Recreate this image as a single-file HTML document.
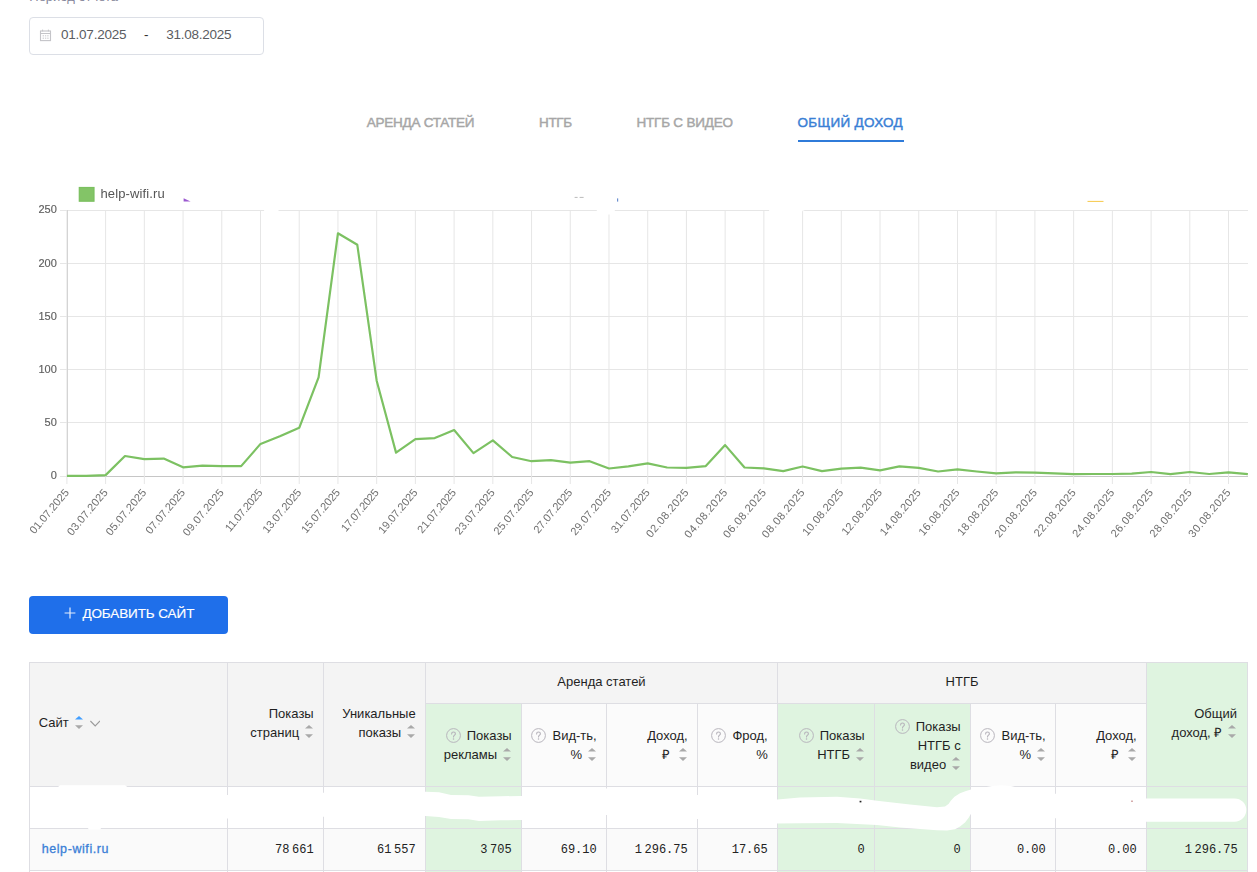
<!DOCTYPE html>
<html lang="ru"><head><meta charset="utf-8"><title>Статистика</title>
<style>
*{box-sizing:border-box;margin:0;padding:0}
html,body{width:1257px;height:872px;overflow:hidden;background:#fff}
body{font-family:"Liberation Sans",sans-serif;position:relative;color:#222}
.abs{position:absolute;white-space:nowrap}
.period{left:29.3px;top:-9.8px;font-size:13px;line-height:14px;color:#85859a}
.dbox{left:29px;top:17px;width:235px;height:38px;border:1px solid #dcdfe6;border-radius:4px;background:#fff}
.dtxt{font-size:13.5px;line-height:16px;color:#5a5c61;top:27.3px;letter-spacing:-0.25px}
.tab{font-size:13.5px;line-height:16px;color:#a6a6a6;top:114.5px;-webkit-text-stroke:0.45px currentColor}
.tab.act{color:#3a7fd5}
.tabline{left:798px;top:140px;width:106px;height:2px;background:#2f7bd9}
svg text{font-family:"Liberation Sans",sans-serif}
.yl{font-size:11px;fill:#5e5e5e;stroke:#5e5e5e;stroke-width:0.15px}
.xl{font-size:11px;fill:#707070}
.lg{font-size:13px;fill:#555;letter-spacing:0.13px}

.btn{left:29px;top:596px;width:199px;height:38px;border-radius:4px;background:#1f6fea}
.btxt{left:82.4px;top:605.3px;font-size:13.5px;line-height:17px;color:#fff;letter-spacing:-0.1px;-webkit-text-stroke:0.15px #fff}
.tb{left:29px;top:662px;width:1219px;height:210px;background:#dedee3}
.c{position:absolute;display:flex;align-items:center;justify-content:flex-end;text-align:right;
   padding:0 9.3px 0 4px;font-size:13px;line-height:19px;color:#1f1f1f;white-space:nowrap}
.c.l{justify-content:flex-start;text-align:left;padding-left:8.7px}
.c.m{justify-content:center;text-align:center;padding:0 0 4px 0}
.c.h{padding-bottom:4px}
.c.t{padding-right:10.1px}
.d{font-family:"Liberation Mono",monospace;font-size:12px;color:#222;letter-spacing:0}
.ts{display:inline-block;width:2.6px}
.q{display:inline-block;width:15px;height:15px;vertical-align:-3px;margin-right:6.1px}
.s{display:inline-block;width:8px;height:13px;vertical-align:-1.5px;margin-left:5.9px;margin-right:0.7px}
.lnk{color:#3b80d7;-webkit-text-stroke:0.3px #3b80d7;font-size:12.5px;letter-spacing:0.58px;position:relative;top:-0.3px;left:3.0px}
</style></head><body>
<div class="abs period">Период отчета</div>
<div class="abs dbox"></div>
<svg class="abs" style="left:39px;top:29px" width="13" height="13" viewBox="0 0 13 13"><rect x="1.5" y="2" width="10" height="9.6" fill="none" stroke="#c4c4c8" stroke-width="1.1"/><line x1="1.5" x2="11.5" y1="4.5" y2="4.5" stroke="#c4c4c8" stroke-width="1"/><line x1="3.6" x2="3.6" y1="0.6" y2="2.4" stroke="#c4c4c8" stroke-width="1"/><line x1="9.4" x2="9.4" y1="0.6" y2="2.4" stroke="#c4c4c8" stroke-width="1"/><g fill="#d0d0d4"><rect x="3.6" y="6.2" width="1.4" height="1.2"/><rect x="5.9" y="6.2" width="1.4" height="1.2"/><rect x="8.2" y="6.2" width="1.4" height="1.2"/><rect x="3.6" y="8.6" width="1.4" height="1.2"/><rect x="5.9" y="8.6" width="1.4" height="1.2"/><rect x="8.2" y="8.6" width="1.4" height="1.2"/></g></svg>
<div class="abs dtxt" style="left:61.1px">01.07.2025</div>
<div class="abs dtxt" style="left:144px;color:#303133">-</div>
<div class="abs dtxt" style="left:166.3px">31.08.2025</div>
<div class="abs tab" id="t1" style="left:366.8px;letter-spacing:-0.25px">АРЕНДА СТАТЕЙ</div>
<div class="abs tab" id="t2" style="left:539px;letter-spacing:-0.37px">НТГБ</div>
<div class="abs tab" id="t3" style="left:636.5px;letter-spacing:-0.21px">НТГБ С ВИДЕО</div>
<div class="abs tab act" id="t4" style="left:797.5px;letter-spacing:0.31px">ОБЩИЙ ДОХОД</div>
<div class="abs tabline"></div>
<svg class="chart" width="1257" height="400" viewBox="0 180 1257 400" style="position:absolute;left:0;top:180px;will-change:transform">
<line x1="60" x2="1248" y1="210.5" y2="210.5" stroke="#e6e6e6" stroke-width="1"/>
<text x="56.8" y="213.14" text-anchor="end" class="yl">250</text>
<line x1="60" x2="1248" y1="263.5" y2="263.5" stroke="#e6e6e6" stroke-width="1"/>
<text x="56.8" y="267.14" text-anchor="end" class="yl">200</text>
<line x1="60" x2="1248" y1="316.5" y2="316.5" stroke="#e6e6e6" stroke-width="1"/>
<text x="56.8" y="320.04" text-anchor="end" class="yl">150</text>
<line x1="60" x2="1248" y1="369.5" y2="369.5" stroke="#e6e6e6" stroke-width="1"/>
<text x="56.8" y="373.14" text-anchor="end" class="yl">100</text>
<line x1="60" x2="1248" y1="422.5" y2="422.5" stroke="#e6e6e6" stroke-width="1"/>
<text x="56.8" y="426.14" text-anchor="end" class="yl">50</text>
<line x1="60" x2="1248" y1="476.5" y2="476.5" stroke="#e6e6e6" stroke-width="1"/>
<line x1="67" x2="1248" y1="476.5" y2="476.5" stroke="#c6c6c6" stroke-width="1"/>
<text x="56.8" y="478.94" text-anchor="end" class="yl">0</text>
<line x1="66.9" x2="66.9" y1="210" y2="484" stroke="#e6e6e6" stroke-width="1"/>
<line x1="67.5" x2="67.5" y1="210" y2="477" stroke="#d4d4d4" stroke-width="1"/>
<text class="xl" text-anchor="end" textLength="54.6" lengthAdjust="spacing" transform="translate(69.60,492.8) rotate(-50)">01.07.2025</text>
<line x1="105.62" x2="105.62" y1="210" y2="484" stroke="#e6e6e6" stroke-width="1"/>
<text class="xl" text-anchor="end" textLength="56.6" lengthAdjust="spacing" transform="translate(108.32,492.8) rotate(-50)">03.07.2025</text>
<line x1="144.34" x2="144.34" y1="210" y2="484" stroke="#e6e6e6" stroke-width="1"/>
<text class="xl" text-anchor="end" textLength="56.6" lengthAdjust="spacing" transform="translate(147.04,492.8) rotate(-50)">05.07.2025</text>
<line x1="183.06" x2="183.06" y1="210" y2="484" stroke="#e6e6e6" stroke-width="1"/>
<text class="xl" text-anchor="end" textLength="54.7" lengthAdjust="spacing" transform="translate(185.76,492.8) rotate(-50)">07.07.2025</text>
<line x1="221.78" x2="221.78" y1="210" y2="484" stroke="#e6e6e6" stroke-width="1"/>
<text class="xl" text-anchor="end" textLength="57.3" lengthAdjust="spacing" transform="translate(224.48,492.8) rotate(-50)">09.07.2025</text>
<line x1="260.5" x2="260.5" y1="210" y2="484" stroke="#e6e6e6" stroke-width="1"/>
<text class="xl" text-anchor="end" textLength="51.7" lengthAdjust="spacing" transform="translate(263.20,492.8) rotate(-50)">11.07.2025</text>
<line x1="299.22" x2="299.22" y1="210" y2="484" stroke="#e6e6e6" stroke-width="1"/>
<text class="xl" text-anchor="end" textLength="53.7" lengthAdjust="spacing" transform="translate(301.92,492.8) rotate(-50)">13.07.2025</text>
<line x1="337.94" x2="337.94" y1="210" y2="484" stroke="#e6e6e6" stroke-width="1"/>
<text class="xl" text-anchor="end" textLength="53.7" lengthAdjust="spacing" transform="translate(340.64,492.8) rotate(-50)">15.07.2025</text>
<line x1="376.67" x2="376.67" y1="210" y2="484" stroke="#e6e6e6" stroke-width="1"/>
<text class="xl" text-anchor="end" textLength="51.8" lengthAdjust="spacing" transform="translate(379.37,492.8) rotate(-50)">17.07.2025</text>
<line x1="415.39" x2="415.39" y1="210" y2="484" stroke="#e6e6e6" stroke-width="1"/>
<text class="xl" text-anchor="end" textLength="54.4" lengthAdjust="spacing" transform="translate(418.09,492.8) rotate(-50)">19.07.2025</text>
<line x1="454.11" x2="454.11" y1="210" y2="484" stroke="#e6e6e6" stroke-width="1"/>
<text class="xl" text-anchor="end" textLength="53.7" lengthAdjust="spacing" transform="translate(456.81,492.8) rotate(-50)">21.07.2025</text>
<line x1="492.83" x2="492.83" y1="210" y2="484" stroke="#e6e6e6" stroke-width="1"/>
<text class="xl" text-anchor="end" textLength="55.7" lengthAdjust="spacing" transform="translate(495.53,492.8) rotate(-50)">23.07.2025</text>
<line x1="531.55" x2="531.55" y1="210" y2="484" stroke="#e6e6e6" stroke-width="1"/>
<text class="xl" text-anchor="end" textLength="55.7" lengthAdjust="spacing" transform="translate(534.25,492.8) rotate(-50)">25.07.2025</text>
<line x1="570.27" x2="570.27" y1="210" y2="484" stroke="#e6e6e6" stroke-width="1"/>
<text class="xl" text-anchor="end" textLength="53.8" lengthAdjust="spacing" transform="translate(572.97,492.8) rotate(-50)">27.07.2025</text>
<line x1="608.99" x2="608.99" y1="210" y2="484" stroke="#e6e6e6" stroke-width="1"/>
<text class="xl" text-anchor="end" textLength="56.4" lengthAdjust="spacing" transform="translate(611.69,492.8) rotate(-50)">29.07.2025</text>
<line x1="647.71" x2="647.71" y1="210" y2="484" stroke="#e6e6e6" stroke-width="1"/>
<text class="xl" text-anchor="end" textLength="53.7" lengthAdjust="spacing" transform="translate(650.41,492.8) rotate(-50)">31.07.2025</text>
<line x1="686.43" x2="686.43" y1="210" y2="484" stroke="#e6e6e6" stroke-width="1"/>
<text class="xl" text-anchor="end" textLength="59.2" lengthAdjust="spacing" transform="translate(689.13,492.8) rotate(-50)">02.08.2025</text>
<line x1="725.15" x2="725.15" y1="210" y2="484" stroke="#e6e6e6" stroke-width="1"/>
<text class="xl" text-anchor="end" textLength="59.9" lengthAdjust="spacing" transform="translate(727.85,492.8) rotate(-50)">04.08.2025</text>
<line x1="763.87" x2="763.87" y1="210" y2="484" stroke="#e6e6e6" stroke-width="1"/>
<text class="xl" text-anchor="end" textLength="59.9" lengthAdjust="spacing" transform="translate(766.57,492.8) rotate(-50)">06.08.2025</text>
<line x1="802.59" x2="802.59" y1="210" y2="484" stroke="#e6e6e6" stroke-width="1"/>
<text class="xl" text-anchor="end" textLength="59.9" lengthAdjust="spacing" transform="translate(805.29,492.8) rotate(-50)">08.08.2025</text>
<line x1="841.31" x2="841.31" y1="210" y2="484" stroke="#e6e6e6" stroke-width="1"/>
<text class="xl" text-anchor="end" textLength="57.2" lengthAdjust="spacing" transform="translate(844.01,492.8) rotate(-50)">10.08.2025</text>
<line x1="880.03" x2="880.03" y1="210" y2="484" stroke="#e6e6e6" stroke-width="1"/>
<text class="xl" text-anchor="end" textLength="56.3" lengthAdjust="spacing" transform="translate(882.73,492.8) rotate(-50)">12.08.2025</text>
<line x1="918.75" x2="918.75" y1="210" y2="484" stroke="#e6e6e6" stroke-width="1"/>
<text class="xl" text-anchor="end" textLength="57.0" lengthAdjust="spacing" transform="translate(921.45,492.8) rotate(-50)">14.08.2025</text>
<line x1="957.48" x2="957.48" y1="210" y2="484" stroke="#e6e6e6" stroke-width="1"/>
<text class="xl" text-anchor="end" textLength="57.0" lengthAdjust="spacing" transform="translate(960.18,492.8) rotate(-50)">16.08.2025</text>
<line x1="996.2" x2="996.2" y1="210" y2="484" stroke="#e6e6e6" stroke-width="1"/>
<text class="xl" text-anchor="end" textLength="57.0" lengthAdjust="spacing" transform="translate(998.90,492.8) rotate(-50)">18.08.2025</text>
<line x1="1034.92" x2="1034.92" y1="210" y2="484" stroke="#e6e6e6" stroke-width="1"/>
<text class="xl" text-anchor="end" textLength="59.2" lengthAdjust="spacing" transform="translate(1037.62,492.8) rotate(-50)">20.08.2025</text>
<line x1="1073.64" x2="1073.64" y1="210" y2="484" stroke="#e6e6e6" stroke-width="1"/>
<text class="xl" text-anchor="end" textLength="58.3" lengthAdjust="spacing" transform="translate(1076.34,492.8) rotate(-50)">22.08.2025</text>
<line x1="1112.36" x2="1112.36" y1="210" y2="484" stroke="#e6e6e6" stroke-width="1"/>
<text class="xl" text-anchor="end" textLength="59.0" lengthAdjust="spacing" transform="translate(1115.06,492.8) rotate(-50)">24.08.2025</text>
<line x1="1151.08" x2="1151.08" y1="210" y2="484" stroke="#e6e6e6" stroke-width="1"/>
<text class="xl" text-anchor="end" textLength="59.0" lengthAdjust="spacing" transform="translate(1153.78,492.8) rotate(-50)">26.08.2025</text>
<line x1="1189.8" x2="1189.8" y1="210" y2="484" stroke="#e6e6e6" stroke-width="1"/>
<text class="xl" text-anchor="end" textLength="59.0" lengthAdjust="spacing" transform="translate(1192.50,492.8) rotate(-50)">28.08.2025</text>
<line x1="1228.52" x2="1228.52" y1="210" y2="484" stroke="#e6e6e6" stroke-width="1"/>
<text class="xl" text-anchor="end" textLength="59.2" lengthAdjust="spacing" transform="translate(1231.22,492.8) rotate(-50)">30.08.2025</text>
<clipPath id="ca"><rect x="66.4" y="205" width="1181.98" height="272"/></clipPath>
<polyline clip-path="url(#ca)" points="66.90,475.9 86.26,475.9 105.62,475.1 124.98,456.0 144.34,459.2 163.70,458.6 183.06,467.3 202.42,465.7 221.78,466.1 241.14,466.1 260.50,443.9 279.86,436.3 299.22,427.8 318.58,377.4 337.94,233.3 357.30,244.8 376.67,380.7 396.03,452.6 415.39,439.1 434.75,438.1 454.11,430.0 473.47,453.1 492.83,440.3 512.19,457.0 531.55,461.2 550.91,460.2 570.27,462.6 589.63,461.2 608.99,468.5 628.35,466.3 647.71,463.4 667.07,467.5 686.43,467.9 705.79,466.1 725.15,445.1 744.51,467.5 763.87,468.3 783.23,471.1 802.59,466.5 821.95,471.1 841.31,468.7 860.67,467.7 880.03,470.3 899.39,466.3 918.75,467.9 938.11,471.5 957.48,469.3 976.84,471.5 996.20,473.4 1015.56,472.3 1034.92,472.6 1054.28,473.4 1073.64,474.2 1093.00,474.0 1112.36,474.0 1131.72,473.7 1151.08,472.0 1170.44,474.2 1189.80,472.0 1209.16,474.0 1228.52,472.3 1247.88,474.2" fill="none" stroke="#7cc162" stroke-width="2.2" stroke-linejoin="round" stroke-linecap="butt"/>
<rect x="79.3" y="187.5" width="14.7" height="13.7" fill="#83c467" stroke="#7bc05f" stroke-width="1.2"/>
<text x="100.5" y="198.3" class="lg">help-wifi.ru</text>
<g fill="#fff"><rect x="264" y="209" width="14.5" height="3" rx="1.5"/><rect x="596.8" y="206" width="18" height="8.4" rx="2"/><rect x="768.9" y="207" width="33.8" height="5" rx="2"/><rect x="802" y="207" width="2.2" height="3.6"/></g>
<rect x="574.6" y="196.9" width="3" height="1" fill="#bbb"/><rect x="579.6" y="196.9" width="4" height="1" fill="#bbb"/>
<rect x="617" y="198.4" width="1.2" height="3.2" fill="#6b8fd0"/>
<path d="M183.6 198.2 L190.6 201.6 L183.6 201.6 Z" fill="#9b59d0"/>
<line x1="1087.5" x2="1103.5" y1="201.4" y2="201.4" stroke="#f7c948" stroke-width="1"/>
</svg>
<div class="abs btn"></div>
<svg class="abs" style="left:64px;top:607px" width="12" height="12" viewBox="0 0 12 12"><path d="M6 0.6 V11.4 M0.6 6 H11.4" stroke="#e4edfc" stroke-width="1.2" fill="none"/></svg>
<div class="abs btxt" id="btxt">ДОБАВИТЬ САЙТ</div>
<div class="abs tb">
<div class="c l h" style="left:1px;top:1px;width:197px;height:123px;background:#f4f4f4"><div>Сайт<svg class="s" viewBox="0 0 8 13"><path d="M0 3.6 L4 0 L8 3.6 Z" fill="#409eff"/><path d="M0 9.3 L4 12.9 L8 9.3 Z" fill="#a9a9a9"/></svg><svg style="display:inline-block;width:10.4px;height:7px;vertical-align:0px;margin-left:6.6px" viewBox="0 0 10.4 7"><path d="M0.4 1.0 L5.2 6.0 L10 1.0" fill="none" stroke="#9a9a9a" stroke-width="1.1"/></svg></div></div>
<div class="c h" style="left:199px;top:1px;width:95px;height:123px;background:#f4f4f4"><div>Показы<br>страниц<svg class="s" viewBox="0 0 8 13"><path d="M0 3.6 L4 0 L8 3.6 Z" fill="#a9a9a9"/><path d="M0 9.3 L4 12.9 L8 9.3 Z" fill="#a9a9a9"/></svg></div></div>
<div class="c h" style="left:295px;top:1px;width:101px;height:123px;background:#f4f4f4"><div>Уникальные<br>показы<svg class="s" viewBox="0 0 8 13"><path d="M0 3.6 L4 0 L8 3.6 Z" fill="#a9a9a9"/><path d="M0 9.3 L4 12.9 L8 9.3 Z" fill="#a9a9a9"/></svg></div></div>
<div class="c m" style="left:397px;top:1px;width:351px;height:40px;background:#f4f4f4"><div>Аренда статей</div></div>
<div class="c m" style="left:749px;top:1px;width:368px;height:40px;background:#f4f4f4"><div>НТГБ</div></div>
<div class="c h t" style="left:1118px;top:1px;width:100px;height:123px;background:#dff4e0"><div>Общий<br>доход, ₽<svg class="s" viewBox="0 0 8 13"><path d="M0 3.6 L4 0 L8 3.6 Z" fill="#a9a9a9"/><path d="M0 9.3 L4 12.9 L8 9.3 Z" fill="#a9a9a9"/></svg></div></div>
<div class="c " style="left:397px;top:42px;width:95px;height:82px;background:#dff4e0"><div><svg class="q" viewBox="0 0 15 15"><circle cx="7.5" cy="7.5" r="6.9" fill="none" stroke="#b8b5bd" stroke-width="1"/><path d="M5.6 5.9 C5.6 4.6 6.5 4 7.5 4 C8.6 4 9.4 4.7 9.4 5.7 C9.4 7.1 7.5 7.1 7.5 8.9" fill="none" stroke="#b5b2ba" stroke-width="1.1" stroke-linecap="round"/><circle cx="7.5" cy="10.9" r="0.75" fill="#b5b2ba"/></svg>Показы<br>рекламы<svg class="s" viewBox="0 0 8 13"><path d="M0 3.6 L4 0 L8 3.6 Z" fill="#a9a9a9"/><path d="M0 9.3 L4 12.9 L8 9.3 Z" fill="#a9a9a9"/></svg></div></div>
<div class="c " style="left:493px;top:42px;width:84px;height:82px;background:#fbfbfb"><div><svg class="q" viewBox="0 0 15 15"><circle cx="7.5" cy="7.5" r="6.9" fill="none" stroke="#b8b5bd" stroke-width="1"/><path d="M5.6 5.9 C5.6 4.6 6.5 4 7.5 4 C8.6 4 9.4 4.7 9.4 5.7 C9.4 7.1 7.5 7.1 7.5 8.9" fill="none" stroke="#b5b2ba" stroke-width="1.1" stroke-linecap="round"/><circle cx="7.5" cy="10.9" r="0.75" fill="#b5b2ba"/></svg>Вид-ть,<br>%<svg class="s" viewBox="0 0 8 13"><path d="M0 3.6 L4 0 L8 3.6 Z" fill="#a9a9a9"/><path d="M0 9.3 L4 12.9 L8 9.3 Z" fill="#a9a9a9"/></svg></div></div>
<div class="c " style="left:578px;top:42px;width:90px;height:82px;background:#fbfbfb"><div>Доход,<br><span style="margin-right:2.7px">₽</span><svg class="s" viewBox="0 0 8 13"><path d="M0 3.6 L4 0 L8 3.6 Z" fill="#a9a9a9"/><path d="M0 9.3 L4 12.9 L8 9.3 Z" fill="#a9a9a9"/></svg></div></div>
<div class="c " style="left:669px;top:42px;width:79px;height:82px;background:#fbfbfb"><div><svg class="q" viewBox="0 0 15 15"><circle cx="7.5" cy="7.5" r="6.9" fill="none" stroke="#b8b5bd" stroke-width="1"/><path d="M5.6 5.9 C5.6 4.6 6.5 4 7.5 4 C8.6 4 9.4 4.7 9.4 5.7 C9.4 7.1 7.5 7.1 7.5 8.9" fill="none" stroke="#b5b2ba" stroke-width="1.1" stroke-linecap="round"/><circle cx="7.5" cy="10.9" r="0.75" fill="#b5b2ba"/></svg>Фрод,<br>%</div></div>
<div class="c " style="left:749px;top:42px;width:96px;height:82px;background:#dff4e0"><div><svg class="q" viewBox="0 0 15 15"><circle cx="7.5" cy="7.5" r="6.9" fill="none" stroke="#b8b5bd" stroke-width="1"/><path d="M5.6 5.9 C5.6 4.6 6.5 4 7.5 4 C8.6 4 9.4 4.7 9.4 5.7 C9.4 7.1 7.5 7.1 7.5 8.9" fill="none" stroke="#b5b2ba" stroke-width="1.1" stroke-linecap="round"/><circle cx="7.5" cy="10.9" r="0.75" fill="#b5b2ba"/></svg>Показы<br>НТГБ<svg class="s" viewBox="0 0 8 13"><path d="M0 3.6 L4 0 L8 3.6 Z" fill="#a9a9a9"/><path d="M0 9.3 L4 12.9 L8 9.3 Z" fill="#a9a9a9"/></svg></div></div>
<div class="c " style="left:846px;top:42px;width:95px;height:82px;background:#dff4e0"><div><svg class="q" viewBox="0 0 15 15"><circle cx="7.5" cy="7.5" r="6.9" fill="none" stroke="#b8b5bd" stroke-width="1"/><path d="M5.6 5.9 C5.6 4.6 6.5 4 7.5 4 C8.6 4 9.4 4.7 9.4 5.7 C9.4 7.1 7.5 7.1 7.5 8.9" fill="none" stroke="#b5b2ba" stroke-width="1.1" stroke-linecap="round"/><circle cx="7.5" cy="10.9" r="0.75" fill="#b5b2ba"/></svg>Показы<br>НТГБ с<br>видео<svg class="s" viewBox="0 0 8 13"><path d="M0 3.6 L4 0 L8 3.6 Z" fill="#a9a9a9"/><path d="M0 9.3 L4 12.9 L8 9.3 Z" fill="#a9a9a9"/></svg></div></div>
<div class="c " style="left:942px;top:42px;width:84px;height:82px;background:#fbfbfb"><div><svg class="q" viewBox="0 0 15 15"><circle cx="7.5" cy="7.5" r="6.9" fill="none" stroke="#b8b5bd" stroke-width="1"/><path d="M5.6 5.9 C5.6 4.6 6.5 4 7.5 4 C8.6 4 9.4 4.7 9.4 5.7 C9.4 7.1 7.5 7.1 7.5 8.9" fill="none" stroke="#b5b2ba" stroke-width="1.1" stroke-linecap="round"/><circle cx="7.5" cy="10.9" r="0.75" fill="#b5b2ba"/></svg>Вид-ть,<br>%<svg class="s" viewBox="0 0 8 13"><path d="M0 3.6 L4 0 L8 3.6 Z" fill="#a9a9a9"/><path d="M0 9.3 L4 12.9 L8 9.3 Z" fill="#a9a9a9"/></svg></div></div>
<div class="c " style="left:1027px;top:42px;width:90px;height:82px;background:#fbfbfb"><div>Доход,<br><span style="margin-right:2.7px">₽</span><svg class="s" viewBox="0 0 8 13"><path d="M0 3.6 L4 0 L8 3.6 Z" fill="#a9a9a9"/><path d="M0 9.3 L4 12.9 L8 9.3 Z" fill="#a9a9a9"/></svg></div></div>
<div class="c " style="left:1px;top:125px;width:197px;height:41px;background:#fff"><div></div></div>
<div class="c " style="left:199px;top:125px;width:95px;height:41px;background:#fff"><div></div></div>
<div class="c " style="left:295px;top:125px;width:101px;height:41px;background:#fff"><div></div></div>
<div class="c " style="left:397px;top:125px;width:95px;height:41px;background:#dff4e0"><div></div></div>
<div class="c " style="left:493px;top:125px;width:84px;height:41px;background:#fff"><div></div></div>
<div class="c " style="left:578px;top:125px;width:90px;height:41px;background:#fff"><div></div></div>
<div class="c " style="left:669px;top:125px;width:79px;height:41px;background:#fff"><div></div></div>
<div class="c " style="left:749px;top:125px;width:96px;height:41px;background:#dff4e0"><div></div></div>
<div class="c " style="left:846px;top:125px;width:95px;height:41px;background:#dff4e0"><div></div></div>
<div class="c " style="left:942px;top:125px;width:84px;height:41px;background:#fff"><div></div></div>
<div class="c " style="left:1027px;top:125px;width:90px;height:41px;background:#fff"><div></div></div>
<div class="c " style="left:1118px;top:125px;width:100px;height:41px;background:#dff4e0"><div></div></div>
<div class="c l" style="left:1px;top:167px;width:197px;height:41px;background:#fafafa"><div><span class="lnk">help-wifi.ru</span></div></div>
<div class="c " style="left:199px;top:167px;width:95px;height:41px;background:#fafafa"><div><span class="d">78<span class="ts"></span>661</span></div></div>
<div class="c " style="left:295px;top:167px;width:101px;height:41px;background:#fafafa"><div><span class="d">61<span class="ts"></span>557</span></div></div>
<div class="c " style="left:397px;top:167px;width:95px;height:41px;background:#dff4e0"><div><span class="d">3<span class="ts"></span>705</span></div></div>
<div class="c " style="left:493px;top:167px;width:84px;height:41px;background:#fafafa"><div><span class="d">69.10</span></div></div>
<div class="c " style="left:578px;top:167px;width:90px;height:41px;background:#fafafa"><div><span class="d">1<span class="ts"></span>296.75</span></div></div>
<div class="c " style="left:669px;top:167px;width:79px;height:41px;background:#fafafa"><div><span class="d">17.65</span></div></div>
<div class="c " style="left:749px;top:167px;width:96px;height:41px;background:#dff4e0"><div><span class="d">0</span></div></div>
<div class="c " style="left:846px;top:167px;width:95px;height:41px;background:#dff4e0"><div><span class="d">0</span></div></div>
<div class="c " style="left:942px;top:167px;width:84px;height:41px;background:#fafafa"><div><span class="d">0.00</span></div></div>
<div class="c " style="left:1027px;top:167px;width:90px;height:41px;background:#fafafa"><div><span class="d">0.00</span></div></div>
<div class="c " style="left:1118px;top:167px;width:100px;height:41px;background:#dff4e0"><div><span class="d">1<span class="ts"></span>296.75</span></div></div>
<div class="c " style="left:1px;top:209px;width:197px;height:41px;background:#fff"><div></div></div>
<div class="c " style="left:199px;top:209px;width:95px;height:41px;background:#fff"><div></div></div>
<div class="c " style="left:295px;top:209px;width:101px;height:41px;background:#fff"><div></div></div>
<div class="c " style="left:397px;top:209px;width:95px;height:41px;background:#dff4e0"><div></div></div>
<div class="c " style="left:493px;top:209px;width:84px;height:41px;background:#fff"><div></div></div>
<div class="c " style="left:578px;top:209px;width:90px;height:41px;background:#fff"><div></div></div>
<div class="c " style="left:669px;top:209px;width:79px;height:41px;background:#fff"><div></div></div>
<div class="c " style="left:749px;top:209px;width:96px;height:41px;background:#dff4e0"><div></div></div>
<div class="c " style="left:846px;top:209px;width:95px;height:41px;background:#dff4e0"><div></div></div>
<div class="c " style="left:942px;top:209px;width:84px;height:41px;background:#fff"><div></div></div>
<div class="c " style="left:1027px;top:209px;width:90px;height:41px;background:#fff"><div></div></div>
<div class="c " style="left:1118px;top:209px;width:100px;height:41px;background:#dff4e0"><div></div></div>
</div>
<svg class="abs" style="left:0;top:770px" width="1257" height="70" viewBox="0 770 1257 70"><path d="M30 795 L56 795 L57.5 787.5 L60 785.3 L125 785.3 L128 787.5 L130 793 L227.5 795 L323.4 792.7 L425.5 791.8 L439 792.3 L451 795 L468.5 795.2 L479 796.8 L501 796.3 L521.4 795.9 L560 790 L606.4 788.4 L650 789 L697.3 795 L740 797.5 L777.5 799.4 L800 797.5 L837 796.7 L860 798.5 L877 800.7 L910 804.5 L937 807.2 L945 806.6 L948.5 804 L951 800.5 L954.5 796.8 L960 793.3 L966 791 L971 789.6 L984 787.5 L992 786 L1001 785.3 L1011 786 L1018 787.8 L1055.5 793.8 L1100 796 L1146.4 798.4 L1234.6 798.4 A11.7 11.7 0 0 1 1234.6 821.8 L1146.4 821.8 L1100 820 L1055.5 818.3 L1010 816 L971 813.8 L968.5 818 L965 822.5 L960 826.5 L955 829.3 L947 830.5 L937 830.2 L900 827.5 L877 825 L837 823 L800 823.2 L777.5 823.4 L740 821.5 L697.3 819 L650 817 L606.4 815 L560 818 L521.4 820 L501 820.3 L479 821 L468.5 819.2 L451 819 L439 816.9 L425.5 816 L323.4 816.8 L227.5 818.4 L103 819 L102 827 L100 829.6 L89 829.6 L87 827 L86 819 L30 819 Z" fill="#fff"/><rect x="859.6" y="800.8" width="1.8" height="1.6" fill="#222"/><rect x="1131.4" y="800.6" width="1.2" height="1.2" fill="#a55"/></svg>
</body></html>
